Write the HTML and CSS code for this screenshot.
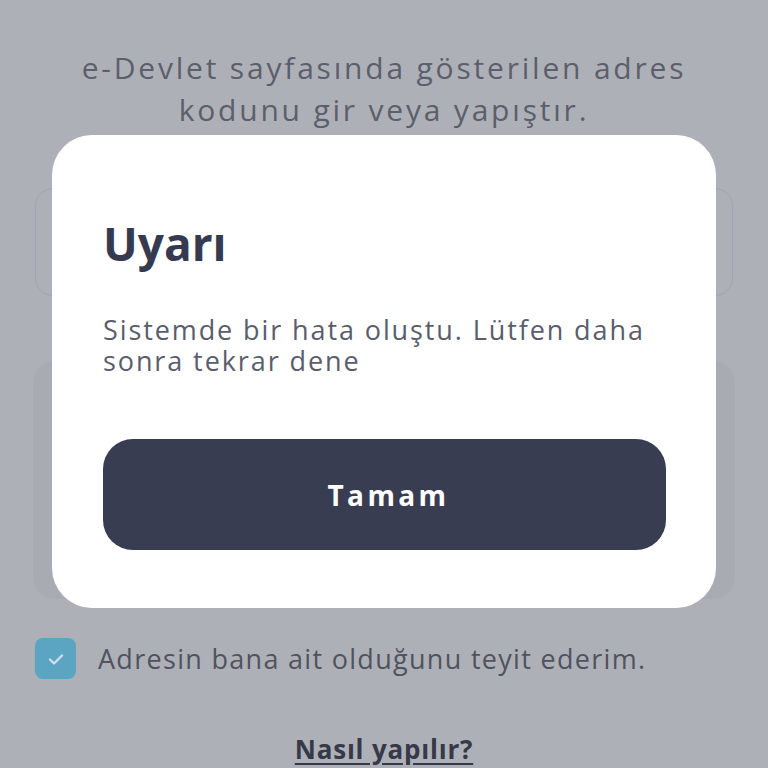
FILE: index.html
```html
<!DOCTYPE html>
<html lang="tr">
<head>
<meta charset="utf-8">
<link rel="stylesheet" href="styles.css">
</head>
<body>
<main class="page">
  <p class="intro">e-Devlet sayfasında gösterilen adres kodunu gir veya yapıştır.</p>
  <div class="input-box"></div>
  <div class="card"></div>
  <label class="confirm">
    <span class="check">
      <svg width="22" height="22" viewBox="0 0 22 22"><path d="M5 11.5l4 4 8-8" fill="none" stroke="#cfe0e8" stroke-width="2.4" stroke-linecap="round" stroke-linejoin="round"/></svg>
    </span>
    <span class="confirm-text">Adresin bana ait olduğunu teyit ederim.</span>
  </label>
  <a class="howto">Nasıl yapılır?</a>
</main>
<div class="overlay">
  <div class="modal">
    <h1 class="modal-title">Uyarı</h1>
    <p class="modal-text">Sistemde bir hata oluştu. Lütfen daha sonra tekrar dene</p>
    <button class="modal-btn">Tamam</button>
  </div>
</div>
</body>
</html>
```

FILE: styles.css
```css
html, body {
  margin: 0;
  padding: 0;
  height: 100%;
}
body {
  background: #aeb0b8;
  font-family: "Open Sans", "Noto Sans", sans-serif;
  overflow: hidden;
}
.page {
  padding: 47px 35px 0 35px;
  display: flex;
  flex-direction: column;
}
.intro {
  margin: 0 -20px;
  text-align: center;
  font-size: 30px;
  line-height: 42px;
  letter-spacing: 2.8px;
  color: #5c5f6b;
  padding: 0 40px;
}
.input-box {
  margin-top: 57px;
  height: 106px;
  border: 1.5px solid #a3a5ae;
  border-radius: 18px;
}
.card {
  margin: 65px -2px 0 -2px;
  height: 238px;
  background: #a9abb3;
  border-radius: 22px;
}
.confirm {
  margin-top: 39px;
  display: flex;
  align-items: center;
  gap: 22px;
}
.check {
  width: 41px;
  height: 41px;
  border-radius: 8px;
  background: #5ba5c3;
  display: flex;
  align-items: center;
  justify-content: center;
}
.confirm-text {
  font-size: 27px;
  letter-spacing: 1.3px;
  color: #50535e;
}
.howto {
  margin-top: 52px;
  align-self: center;
  font-size: 26px;
  font-weight: 700;
  letter-spacing: 0.8px;
  color: #363948;
  text-decoration: underline;
  text-underline-offset: 4px;
}
.overlay {
  position: fixed;
  inset: 0;
  display: flex;
  justify-content: center;
  align-items: flex-start;
  padding-top: 135px;
}
.modal {
  width: 664px;
  height: 473px;
  box-sizing: border-box;
  background: #ffffff;
  border-radius: 40px;
  padding: 80px 51px 0 51px;
}
.modal-title {
  margin: 0;
  font-size: 46px;
  line-height: 56px;
  font-weight: 700;
  color: #353a50;
}
.modal-text {
  margin: 43px 0 0 0;
  font-size: 27px;
  line-height: 31px;
  letter-spacing: 1.9px;
  color: #5a5d6c;
}
.modal-btn {
  margin-top: 63px;
  width: 563px;
  height: 111px;
  border: none;
  border-radius: 30px;
  background: #393d52;
  color: #ffffff;
  font-family: "Open Sans", "Noto Sans", sans-serif;
  font-size: 28px;
  font-weight: 700;
  letter-spacing: 3.4px;
  padding: 0 0 0 8px;
}
```
